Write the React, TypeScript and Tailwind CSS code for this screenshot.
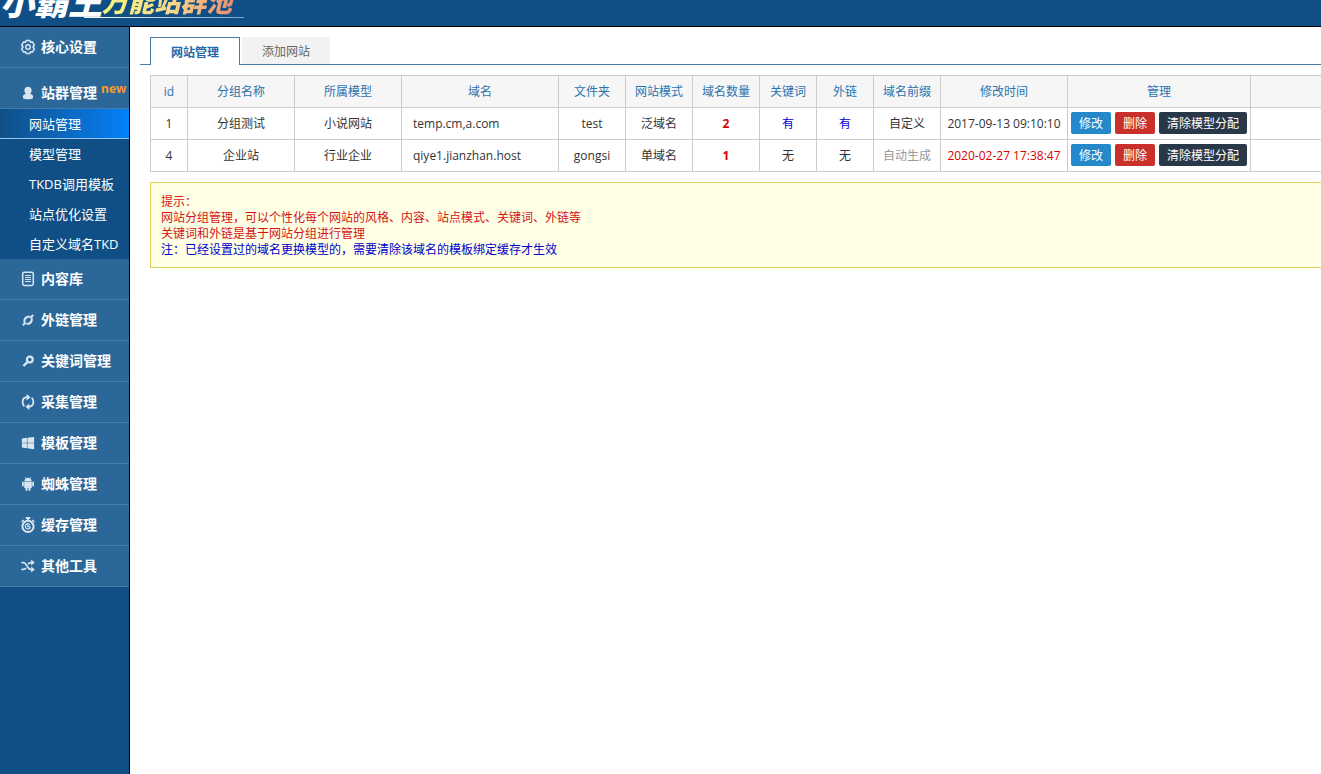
import React from "react";
import { FaWindows } from "react-icons/fa";

interface MenuItem {
  label: string;
  icon: React.ReactNode;
  isNew?: boolean;
  children?: string[];
}

interface SiteRow {
  id: number;
  group: string;
  model: string;
  domain: string;
  folder: string;
  mode: string;
  count: number;
  keywords: boolean;
  links: boolean;
  prefix: string;
  customPrefix: boolean;
  updated: string;
  recent: boolean;
}

const GearIcon = () => (
  <svg viewBox="0 0 16 16" className="h-4 w-4" fill="none" stroke="currentColor" strokeLinejoin="round">
    <path
      d="M6.2 1.4h3.6l.7 1.8 1.9-.3 1.9 3.1L13 8l1.3 2-1.9 3.1-1.9-.3-.7 1.8H6.2l-.7-1.8-1.9.3L1.7 10 3 8 1.7 6l1.9-3.1 1.9.3z"
      strokeWidth="1.5"
    />
    <circle cx="8" cy="8" r="2.3" strokeWidth="1.4" />
  </svg>
);

const UserIcon = () => (
  <svg viewBox="0 0 12 14" className="h-[14px] w-3" fill="currentColor">
    <path d="M6 .8c2.2 0 3.6 1.5 3.6 3.6 0 1.5-.6 2.7-1.6 3.4 2 .4 3.2 1.5 3.2 3.4 0 1.6-1.8 2-5.2 2s-5.2-.4-5.2-2c0-1.9 1.2-3 3.2-3.4-1-.7-1.6-1.9-1.6-3.4C2.400 2.300 3.800.8 6 .8z" />
  </svg>
);

const DocIcon = () => (
  <svg viewBox="0 0 14 16" className="h-4 w-[14px]" fill="none" stroke="currentColor">
    <rect x="1.7" y="1.2" width="10.6" height="13.2" rx="1.6" strokeWidth="1.5" />
    <path d="M4 4.500h6M4 6.500h6M4 8.500h6M4 10.500h6" strokeWidth="1" />
  </svg>
);

const LinkIcon = () => (
  <svg viewBox="0 0 14 14" className="h-[14px] w-[14px]" fill="none" stroke="currentColor" strokeWidth="2">
    <path d="M9 3.800H6.600C4.600 4.600 3.200 6.400 3.400 8.400l.4 1.600M5.400 10.800h2.400c2-1 3.200-2.800 3-4.800L10.400 4.400" />
    <path d="M9.400 4.800l2.800-2.800M4.600 9.800l-2.800 2.400" />
  </svg>
);

const KeyIcon = () => (
  <svg viewBox="0 0 14 14" className="h-[14px] w-[14px]" fill="none" stroke="currentColor">
    <circle cx="8.8" cy="5.6" r="2.900" strokeWidth="2.200" />
    <path d="M6.600 7.800L2.400 12" strokeWidth="2.400" />
  </svg>
);

const SyncIcon = () => (
  <svg viewBox="0 0 14 16" className="h-4 w-[14px]" fill="currentColor">
    <path
      d="M3.400 12.200C1.900 11.200 1.600 9.600 1.600 8c0-2.600 1.800-4.600 4.800-4.800M10.600 3.800c1.500 1 1.800 2.600 1.800 4.200 0 2.600-1.800 4.600-4.800 4.800"
      fill="none"
      stroke="currentColor"
      strokeWidth="1.800"
    />
    <path d="M5.600 0l4 3.200-4 3.200zM8.400 9.600v6.400l-4-3.200z" />
  </svg>
);

const AndroidIcon = () => (
  <svg viewBox="0 0 14 16" className="h-4 w-[14px]" fill="currentColor">
    <path d="M3.400 5C3.500 3.200 4.900 1.800 7 1.800S10.500 3.200 10.600 5z" />
    <path d="M4.200 1l1 1.600M9.800 1l-1 1.600" stroke="currentColor" strokeWidth=".7" />
    <path d="M3.200 5.400h7.600v5.800c0 .6-.4 1-1 1H4.200c-.6 0-1-.4-1-1z" />
    <rect x="1" y="5.400" width="1.800" height="5" rx=".9" />
    <rect x="11.200" y="5.400" width="1.800" height="5" rx=".9" />
    <rect x="4.600" y="11" width="1.900" height="4" rx=".9" />
    <rect x="7.500" y="11" width="1.900" height="4" rx=".9" />
  </svg>
);

const StopwatchIcon = () => (
  <svg viewBox="0 0 16 16" className="h-4 w-4" fill="none" stroke="currentColor">
    <circle cx="8" cy="9.400" r="5.600" strokeWidth="2" />
    <path d="M5.800 1h4.400M8 1v2.600" strokeWidth="1.800" />
    <path d="M12.200 3l2.200 2M3.800 3l-2.200 2" strokeWidth="1.600" />
    <path d="M10.200 8A2.600 2.600 0 1 0 10.400 10.200M8 7.400v2.200h2.400" strokeWidth="1.200" />
  </svg>
);

const ShuffleIcon = () => (
  <svg viewBox="0 0 14 14" className="h-[14px] w-[14px]" fill="currentColor">
    <path
      d="M.4 3.600h2c1.400 0 2.200.8 3 2.200l1.400 2.400c.8 1.400 1.600 2.200 3 2.200h1M.4 10.400h2c1.200 0 2-.6 2.600-1.400M7.200 5.200c.6-1 1.400-1.600 2.600-1.600h1"
      fill="none"
      stroke="currentColor"
      strokeWidth="1.700"
    />
    <path d="M10.200.6l3.600 3-3.600 3zM10.200 7.400l3.600 3-3.600 3z" />
  </svg>
);

const menu: MenuItem[] = [
  { label: "核心设置", icon: <GearIcon /> },
  {
    label: "站群管理",
    icon: <UserIcon />,
    isNew: true,
    children: ["网站管理", "模型管理", "TKDB调用模板", "站点优化设置", "自定义域名TKD"],
  },
  { label: "内容库", icon: <DocIcon /> },
  { label: "外链管理", icon: <LinkIcon /> },
  { label: "关键词管理", icon: <KeyIcon /> },
  { label: "采集管理", icon: <SyncIcon /> },
  { label: "模板管理", icon: <FaWindows className="h-[14px] w-[14px]" /> },
  { label: "蜘蛛管理", icon: <AndroidIcon /> },
  { label: "缓存管理", icon: <StopwatchIcon /> },
  { label: "其他工具", icon: <ShuffleIcon /> },
];

const columns = [
  { title: "id", width: "w-[37px]" },
  { title: "分组名称", width: "w-[107px]" },
  { title: "所属模型", width: "w-[107px]" },
  { title: "域名", width: "w-[157px]" },
  { title: "文件夹", width: "w-[67px]" },
  { title: "网站模式", width: "w-[67px]" },
  { title: "域名数量", width: "w-[67px]" },
  { title: "关键词", width: "w-[57px]" },
  { title: "外链", width: "w-[57px]" },
  { title: "域名前缀", width: "w-[67px]" },
  { title: "修改时间", width: "w-[127px]" },
  { title: "管理", width: "w-[183px]" },
];

const rows: SiteRow[] = [
  {
    id: 1,
    group: "分组测试",
    model: "小说网站",
    domain: "temp.cm,a.com",
    folder: "test",
    mode: "泛域名",
    count: 2,
    keywords: true,
    links: true,
    prefix: "自定义",
    customPrefix: true,
    updated: "2017-09-13 09:10:10",
    recent: false,
  },
  {
    id: 4,
    group: "企业站",
    model: "行业企业",
    domain: "qiye1.jianzhan.host",
    folder: "gongsi",
    mode: "单域名",
    count: 1,
    keywords: false,
    links: false,
    prefix: "自动生成",
    customPrefix: false,
    updated: "2020-02-27 17:38:47",
    recent: true,
  },
];

const Header = () => (
  <header className="flex h-[27px] flex-shrink-0 items-end overflow-hidden border-b border-black bg-[#0f4f85]">
    <div className="relative flex items-end pr-2 pb-[7px] font-black italic whitespace-nowrap">
      <span className="text-[34px] leading-[34px] text-white">小霸王</span>
      <span className="bg-gradient-to-r from-[#f4f77a] via-[#f7d98a] to-[#e88a70] bg-clip-text pr-1 text-[26px] leading-[34px] text-transparent">
        万能站群池
      </span>
      <span className="absolute right-0 bottom-2 h-px w-[160px] bg-gradient-to-r from-white to-[#7fa3c0]" />
    </div>
  </header>
);

const Sidebar = () => (
  <nav className="w-[130px] flex-shrink-0 border-r border-black bg-[#0f4f85]">
    <ul>
      {menu.map((item) => (
        <li key={item.label}>
          <a
            href="#"
            className={`flex h-[41px] items-center border-b border-[#457da9] bg-[#2b6899] pl-5 text-[14px] font-bold whitespace-nowrap text-white ${
              item.isNew ? "pt-[10px]" : ""
            }`}
          >
            <span className="flex w-4 justify-center text-[#d9e6f1]">{item.icon}</span>
            <span className="ml-[5px] pb-0.5">{item.label}</span>
            {item.isNew && <sup className="top-[-4px] ml-1 text-[12px] leading-none text-[#f79a2c]">new</sup>}
          </a>
          {item.children && (
            <ul>
              {item.children.map((child, index) => (
                <li key={child}>
                  <a
                    href="#"
                    className={`flex h-[30px] items-center pt-0.5 pl-[29px] text-[13px] whitespace-nowrap text-white ${
                      index === 0
                        ? "border-b border-[#8ec4ee] bg-gradient-to-r from-[#0f4f85] to-[#0381fb]"
                        : ""
                    }`}
                  >
                    {child}
                  </a>
                </li>
              ))}
            </ul>
          )}
        </li>
      ))}
    </ul>
  </nav>
);

const Flag = ({ on }: { on: boolean }) =>
  on ? <span className="text-[#0000d0]">有</span> : <span>无</span>;

const SiteTable = () => (
  <table className="w-full table-fixed border-collapse text-center text-[12px] text-[#333333]">
    <colgroup>
      {columns.map((col) => (
        <col key={col.title} className={col.width} />
      ))}
      <col />
    </colgroup>
    <thead>
      <tr className="h-8 bg-[#f6f6f6] text-[#2b72ae]">
        {columns.map((col) => (
          <th key={col.title} className="border border-[#cccccc] font-normal whitespace-nowrap">
            {col.title}
          </th>
        ))}
        <th className="border-y border-[#cccccc]" />
      </tr>
    </thead>
    <tbody className="[&_td]:border [&_td]:border-[#cccccc] [&_td]:whitespace-nowrap">
      {rows.map((row) => (
        <tr key={row.id} className="h-8">
          <td>{row.id}</td>
          <td>{row.group}</td>
          <td>{row.model}</td>
          <td className="pl-[11px] text-left">{row.domain}</td>
          <td>{row.folder}</td>
          <td>{row.mode}</td>
          <td className="font-bold text-[#e00000]">{row.count}</td>
          <td>
            <Flag on={row.keywords} />
          </td>
          <td>
            <Flag on={row.links} />
          </td>
          <td className={row.customPrefix ? "" : "text-[#999999]"}>{row.prefix}</td>
          <td className={row.recent ? "text-[#e00000]" : ""}>{row.updated}</td>
          <td className="pb-0.5">
            <div className="flex justify-center gap-1 text-white">
              <button className="h-[22px] rounded-xs bg-[#2588ca] px-2 pt-0.5">修改</button>
              <button className="h-[22px] rounded-xs bg-[#c9302c] px-2 pt-0.5">删除</button>
              <button className="h-[22px] rounded-xs bg-[#283849] px-2 pt-0.5">清除模型分配</button>
            </div>
          </td>
          <td className="border-r-0!" />
        </tr>
      ))}
    </tbody>
  </table>
);

const App = () => {
  return (
    <div className="flex min-h-screen flex-col bg-white font-['Open_Sans','Noto_Sans_CJK_SC',sans-serif]">
      <Header />
      <div className="flex flex-1">
        <Sidebar />
        <main className="min-w-0 flex-1 pt-[10px] pl-[10px]">
          {/* Tabs */}
          <div className="flex h-7 items-end border-b border-[#4a7ba6] pl-[10px] text-[12px]">
            <button className="-mb-px h-7 w-[90px] border border-b-0 border-[#4a7ba6] bg-white pt-0.5 font-bold text-[#2068a8]">
              网站管理
            </button>
            <button className="ml-0.5 h-[27px] w-[88px] bg-[#f2f2f2] pt-0.5 text-[#666666]">添加网站</button>
          </div>

          <div className="pt-[10px] pl-[10px]">
            <SiteTable />

            {/* Tips */}
            <div className="mt-[10px] border border-r-0 border-[#e3cf5c] bg-[#ffffe6] px-[10px] pt-[11px] pb-[9px] text-[12px] leading-4 text-[#d41414]">
              <p>提示：</p>
              <p>网站分组管理，可以个性化每个网站的风格、内容、站点模式、关键词、外链等</p>
              <p>关键词和外链是基于网站分组进行管理</p>
              <p className="text-[#0000c8]">注：已经设置过的域名更换模型的，需要清除该域名的模板绑定缓存才生效</p>
            </div>
          </div>
        </main>
      </div>
    </div>
  );
};

export default App;
